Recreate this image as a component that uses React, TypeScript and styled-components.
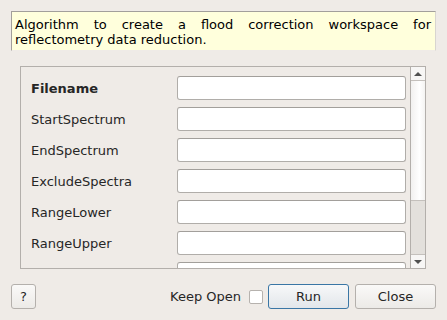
import React, { useState } from "react";
import styled, { createGlobalStyle } from "styled-components";

const GlobalStyle = createGlobalStyle`
	html, body {
		margin: 0;
		padding: 0;
		background: #efebe7;
		font-family: "DejaVu Sans", sans-serif;
		font-size: 13px;
		color: #1f1f1f;
	}
`;

// last row is scrolled out of view, only the top of its input shows
const properties = [
	{ name: "Filename", mandatory: true },
	{ name: "StartSpectrum" },
	{ name: "EndSpectrum" },
	{ name: "ExcludeSpectra" },
	{ name: "RangeLower" },
	{ name: "RangeUpper" },
	{ name: "" },
];

const App = () => {
	const [keepOpen, setKeepOpen] = useState(false);

	return (
		<>
			<GlobalStyle />
			<Dialog>
				<Description>
					<JustifiedLine>Algorithm to create a flood correction workspace for</JustifiedLine>
					<div>reflectometry data reduction.</div>
				</Description>

				<ScrollArea>
					<PropertyList>
						{properties.map((p, i) => (
							<PropertyRow key={i}>
								<PropertyLabel $bold={p.mandatory}>{p.name}</PropertyLabel>
								<PropertyInput />
							</PropertyRow>
						))}
					</PropertyList>
					<ScrollBar>
						<ArrowButton>
							<ArrowUp />
						</ArrowButton>
						<ScrollHandle />
						<ScrollTrack />
						<ArrowButton $bottom>
							<ArrowDown />
						</ArrowButton>
					</ScrollBar>
				</ScrollArea>

				<ButtonRow>
					<Button $width={25}>?</Button>
					<RightGroup>
						<KeepOpenLabel>
							Keep Open
							<CheckBox $checked={keepOpen} onClick={() => setKeepOpen(!keepOpen)} />
						</KeepOpenLabel>
						<Button $width={81} $primary>Run</Button>
						<Button $width={81}>Close</Button>
					</RightGroup>
				</ButtonRow>
			</Dialog>
		</>
	);
};

export default App;

// Styled Components
const Dialog = styled.div`
	width: 447px;
	height: 320px;
	box-sizing: border-box;
	padding: 11px 11px 0 11px;
	display: flex;
	flex-direction: column;
	overflow: hidden;
`;

const Description = styled.div`
	height: 40px;
	box-sizing: border-box;
	background: #ffffdc;
	border-top: 1px solid #a29f9b;
	border-left: 1px solid #a29f9b;
	border-right: 1px solid #d8d5d0;
	border-bottom: 1px solid #efebe7;
	padding: 5px 4px 0 3px;
	line-height: 15px;
	font-size: 13px;
	color: #000;
`;

const JustifiedLine = styled.div`
	text-align: justify;
	text-align-last: justify;
`;

const ScrollArea = styled.div`
	margin: 15px 10px 0 9px;
	height: 203px;
	box-sizing: border-box;
	border: 1px solid #b3afab;
	display: flex;
	overflow: hidden;
`;

const PropertyList = styled.div`
	flex: 1;
	padding: 9px 4px 0 10px;
	display: flex;
	flex-direction: column;
	gap: 7px;
`;

const PropertyRow = styled.div`
	display: flex;
	align-items: center;
	height: 24px;
	flex-shrink: 0;
`;

const PropertyLabel = styled.div<{ $bold?: boolean }>`
	width: 146px;
	font-weight: ${(p) => (p.$bold ? "bold" : "normal")};
	color: #262626;
`;

const PropertyInput = styled.div`
	flex: 1;
	height: 24px;
	box-sizing: border-box;
	background: #fff;
	border: 1px solid #b0ada9;
	border-top-color: #a29f9b;
	border-radius: 3px;
`;

const ScrollBar = styled.div`
	width: 14px;
	border-left: 1px solid #b3afab;
	display: flex;
	flex-direction: column;
	background: #e3e0dc;
`;

const ArrowButton = styled.div<{ $bottom?: boolean }>`
	height: 13px;
	background: #f7f6f5;
	display: flex;
	align-items: center;
	justify-content: center;
	${(p) => (p.$bottom ? "border-top: 1px solid #c4c0bc;" : "border-bottom: 1px solid #c4c0bc;")}
`;

const ArrowUp = styled.div`
	width: 0;
	height: 0;
	border-left: 4px solid transparent;
	border-right: 4px solid transparent;
	border-bottom: 4px solid #505050;
`;

const ArrowDown = styled.div`
	width: 0;
	height: 0;
	border-left: 4px solid transparent;
	border-right: 4px solid transparent;
	border-top: 4px solid #505050;
`;

const ScrollHandle = styled.div`
	height: 119px;
	background: linear-gradient(to right, #f2f1f0, #ffffff 60%, #f4f3f2);
	border-bottom: 1px solid #c4c0bc;
`;

const ScrollTrack = styled.div`
	flex: 1;
	background: #e3e0dc;
`;

const ButtonRow = styled.div`
	margin-top: 15px;
	display: flex;
	align-items: center;
	justify-content: space-between;
`;

const RightGroup = styled.div`
	display: flex;
	align-items: center;
	gap: 6px;
`;

const KeepOpenLabel = styled.div`
	display: flex;
	align-items: center;
	gap: 8px;
	color: #262626;
`;

const CheckBox = styled.div<{ $checked: boolean }>`
	width: 14px;
	height: 14px;
	box-sizing: border-box;
	background: #fff;
	border: 1px solid #b6b2ae;
	border-radius: 2px;
	margin-right: -1px;
`;

const Button = styled.div<{ $width: number; $primary?: boolean }>`
	width: ${(p) => p.$width}px;
	height: 25px;
	box-sizing: border-box;
	display: flex;
	align-items: center;
	justify-content: center;
	border: 1px solid ${(p) => (p.$primary ? "#3a76a5" : "#b4b0ac")};
	border-radius: 3px;
	background: ${(p) =>
		p.$primary
			? "linear-gradient(to bottom, #f7f8f9, #e2e6ea)"
			: "linear-gradient(to bottom, #faf9f8, #eceae7)"};
	color: #262626;
	font-size: 13px;
	cursor: pointer;
`;
